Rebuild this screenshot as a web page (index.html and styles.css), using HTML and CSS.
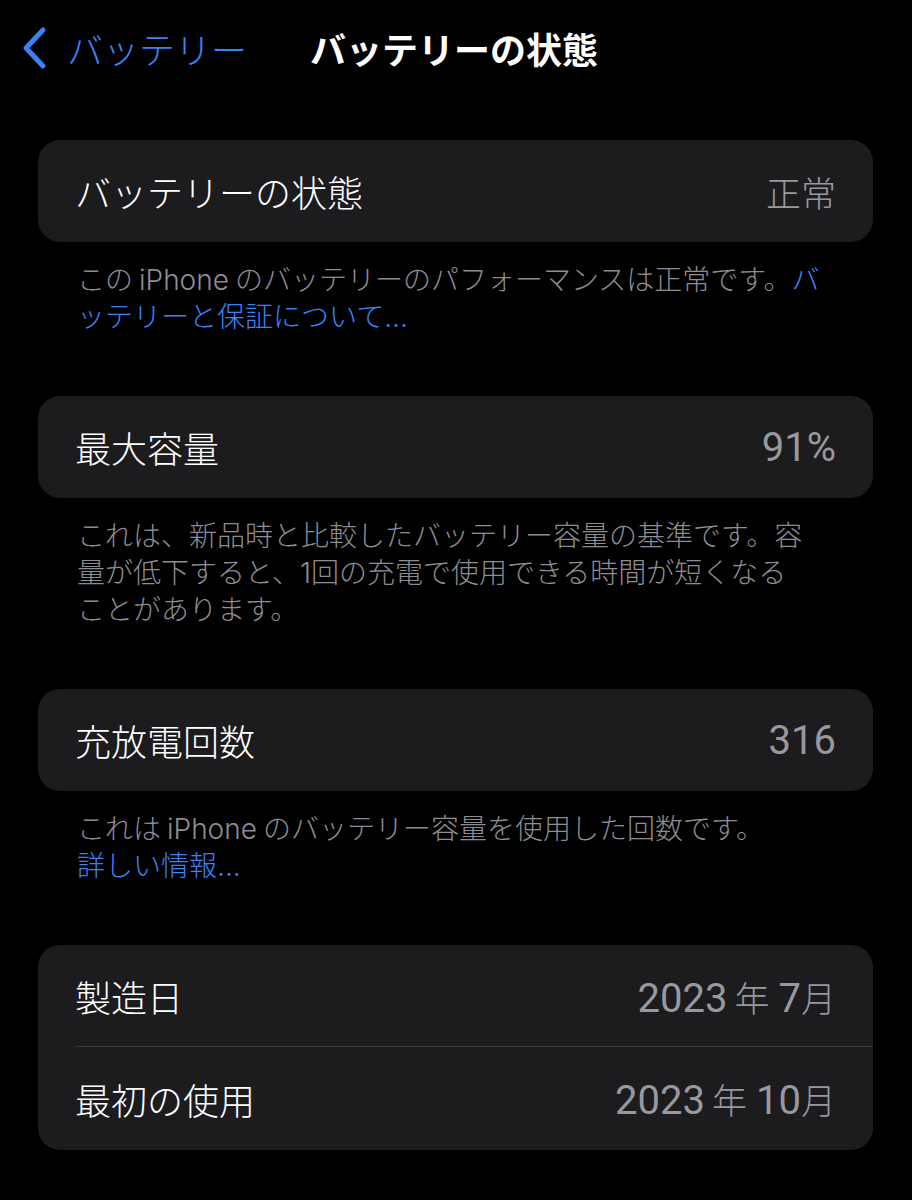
FILE: index.html
```html
<!DOCTYPE html>
<html lang="ja">
<head>
    <meta charset="UTF-8">
    <meta name="viewport" content="width=device-width, initial-scale=1.0">
    <title>バッテリーの状態</title>
    <link rel="stylesheet" href="styles.css">
</head>
<body>
    <div class="nav">
        <div class="nav-back">
            <svg class="chevron" width="28" height="44" viewBox="0 0 28 44">
                <path d="M23 4 L6 22 L23 40" fill="none" stroke="#3a83f5" stroke-width="5" stroke-linecap="round" stroke-linejoin="round"/>
            </svg>
            <span>バッテリー</span>
        </div>
        <div class="nav-title">バッテリーの状態</div>
    </div>

    <div class="content">
        <!-- health -->
        <div class="group">
            <div class="card">
                <div class="row">
                    <div class="row-label">バッテリーの状態</div>
                    <div class="row-value">正常</div>
                </div>
            </div>
            <div class="footer">この<span class="latin">iPhone</span>のバッテリーのパフォーマンスは正常です。<a class="link">バ<br>ッテリーと保証について...</a></div>
        </div>

        <!-- capacity -->
        <div class="group">
            <div class="card">
                <div class="row">
                    <div class="row-label">最大容量</div>
                    <div class="row-value"><span class="num">91%</span></div>
                </div>
            </div>
            <div class="footer">これは、新品時と比較したバッテリー容量の基準です。容<br>量が低下すると、1回の充電で使用できる時間が短くなる<br>ことがあります。</div>
        </div>

        <!-- cycle count -->
        <div class="group">
            <div class="card">
                <div class="row">
                    <div class="row-label">充放電回数</div>
                    <div class="row-value"><span class="num">316</span></div>
                </div>
            </div>
            <div class="footer">これは<span class="latin">iPhone</span>のバッテリー容量を使用した回数です。<br><a class="link">詳しい情報...</a></div>
        </div>

        <!-- dates -->
        <div class="group">
            <div class="card">
                <div class="row">
                    <div class="row-label">製造日</div>
                    <div class="row-value"><span class="num">2023</span><span class="unit">年</span><span class="num">7</span>月</div>
                </div>
                <div class="row">
                    <div class="row-label">最初の使用</div>
                    <div class="row-value"><span class="num">2023</span><span class="unit">年</span><span class="num">10</span>月</div>
                </div>
            </div>
        </div>
    </div>
</body>
</html>
```

FILE: styles.css
```css
:root {
    --bg: #000000;
    --card: #1c1c1e;
    --text: #ffffff;
    --value: #98989e;
    --footer: #8d8d93;
    --link: #3a83f5;
    --sep: #38383a;
}

body {
    margin: 0;
    background: var(--bg);
    color: var(--text);
    font-family: "Inter", "Noto Sans CJK JP", sans-serif;
}

.nav {
    position: relative;
    height: 95px;
    display: flex;
    align-items: center;
    justify-content: center;
}

.nav-back {
    position: absolute;
    left: 20px;
    top: 0;
    height: 95px;
    display: flex;
    align-items: center;
    gap: 19px;
    color: var(--link);
    font-size: 36px;
    font-weight: 300;
}

.chevron {
    display: block;
}

.nav-title {
    font-size: 36px;
    font-weight: 700;
    margin-left: -4px;
}

.content {
    padding: 45px 39px 0 38px;
    display: flex;
    flex-direction: column;
    gap: 60px;
}

.card {
    background: var(--card);
    border-radius: 22px;
    overflow: hidden;
}

.row {
    height: 102px;
    display: flex;
    align-items: center;
    justify-content: space-between;
    padding: 0 37px 0 37px;
    font-size: 36px;
    font-weight: 300;
}

.row + .row {
    height: 103px;
    position: relative;
}

.row + .row::before {
    content: "";
    position: absolute;
    left: 37px;
    right: 0;
    top: -1px;
    height: 1px;
    background: var(--sep);
}

.row-value {
    color: var(--value);
    font-size: 35px;
}

.row-value .num {
    font-family: "Roboto", "Noto Sans CJK JP", sans-serif;
    font-size: 40px;
    font-weight: 400;
}

.row-value .unit {
    margin: 0 9px 0 7px;
}

.footer {
    padding: 20px 38px 0 39px;
    font-size: 28px;
    line-height: 37px;
    color: var(--footer);
    font-weight: 300;
    white-space: nowrap;
}

.footer .latin {
    margin: 0 6px;
}

.link {
    color: var(--link);
}
```
